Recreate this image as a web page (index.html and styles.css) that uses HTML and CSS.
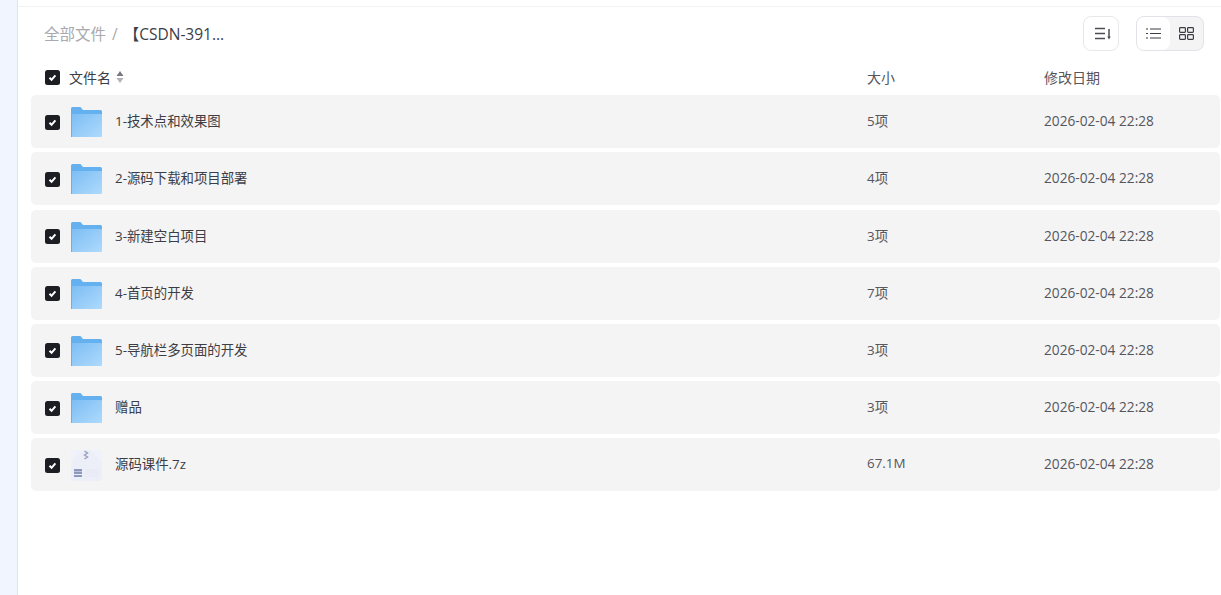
FILE: index.html
```html
<!DOCTYPE html>
<html lang="zh-CN">
<head>
    <meta charset="UTF-8">
    <title>全部文件</title>
    <link rel="stylesheet" href="styles.css">
</head>
<body>
    <svg class="icon-defs" width="0" height="0">
        <defs>
            <linearGradient id="folderFront" x1="0" y1="0" x2="1" y2="1">
                <stop offset="0" stop-color="#7cbdf4"/>
                <stop offset="1" stop-color="#aedafc"/>
            </linearGradient>
            <symbol id="folder" viewBox="0 0 31 30">
                <path d="M0 1.500A1.500 1.500 0 0 1 1.500 0h8l2.500 3h17.500a1.500 1.500 0 0 1 1.500 1.500V12H0z" fill="#65b0ef"/>
                <rect x="0" y="7" width="31" height="23" rx="1" fill="url(#folderFront)"/>
                <rect x="0" y="7" width="1" height="23" fill="#65b0ef"/>
                <rect x="24" y="10" width="5" height="1" fill="#9ccbf3"/>
                <rect x="24" y="12.500" width="5" height="1" fill="#9ccbf3"/>
            </symbol>
            <symbol id="archive" viewBox="0 0 31 31">
                <rect width="31" height="31" rx="3" fill="#f0f2fb"/>
                <path d="M0 12L12 0h7l12 12v16a3 3 0 0 1-3 3H3a3 3 0 0 1-3-3z" fill="#eceef8"/>
                <path d="M13.500 1l3 2-3 2 3 2-3 2" fill="none" stroke="#9aa3c6" stroke-width="1.500"/>
                <path d="M3 19h8v2.500H3zM3 22h8v2H3zM3 25h8v2H3z" fill="#8d98bd"/>
                <rect x="14" y="19" width="14" height="8" fill="#e9ebf6"/>
            </symbol>
            <symbol id="check" viewBox="0 0 15 15">
                <rect width="15" height="15" rx="2.500" fill="#1d1e24"/>
                <path d="M4.500 7.700l2.100 2.100 3.800-4.400" fill="none" stroke="#fff" stroke-width="2"/>
            </symbol>
        </defs>
    </svg>

    <div class="sidebar"></div>

    <main class="content">
        <div class="toolbar">
            <div class="breadcrumb">
                <span class="crumb-root">全部文件</span>
                <span class="crumb-sep">/</span>
                <span class="crumb-current">【CSDN-391...</span>
            </div>
            <div class="toolbar-actions">
                <button class="tool-btn" type="button">
                    <svg width="16" height="13" viewBox="0 0 16 13" fill="none" stroke="#4c4d55" stroke-width="1.500">
                        <path d="M0 1.500h10M0 6.500h10M0 11.500h10M14 2v9"/>
                        <path d="M12.300 9.500h3.400L14 12.500z" fill="#4c4d55" stroke="none"/>
                    </svg>
                </button>
                <div class="view-switch">
                    <span class="view-option view-active">
                        <svg width="15" height="11" viewBox="0 0 15 11" stroke="#3c3d45" stroke-width="1.200">
                            <path d="M0 1h2M4 1h11M0 5.500h2M4 5.500h11M0 10h2M4 10h11"/>
                        </svg>
                    </span>
                    <span class="view-option">
                        <svg width="15" height="13" viewBox="0 0 15 13" fill="none" stroke="#3c3d45" stroke-width="1.200">
                            <rect x=".6" y=".6" width="5.800" height="4.800" rx=".8"/>
                            <rect x="8.600" y=".6" width="5.800" height="4.800" rx=".8"/>
                            <rect x=".6" y="7.600" width="5.800" height="4.800" rx=".8"/>
                            <rect x="8.600" y="7.600" width="5.800" height="4.800" rx=".8"/>
                        </svg>
                    </span>
                </div>
            </div>
        </div>

        <div class="list-head">
            <svg class="check" width="15" height="15"><use href="#check"/></svg>
            <span class="col-name">文件名<svg class="sort-caret" width="8" height="12" viewBox="0 0 8 12">
                    <path d="M4 0l3.500 5H.5z" fill="#77787e"/>
                    <path d="M4 12L.5 7h7z" fill="#b0b1b5"/>
                </svg></span>
            <span class="col-size">大小</span>
            <span class="col-date">修改日期</span>
        </div>

        <div class="file-list">
            <div class="file-row">
                <svg class="check" width="15" height="15"><use href="#check"/></svg>
                <svg class="file-icon" width="31" height="30"><use href="#folder"/></svg>
                <span class="col-name">1-技术点和效果图</span>
                <span class="col-size">5项</span>
                <span class="col-date">2026-02-04 22:28</span>
            </div>
            <div class="file-row">
                <svg class="check" width="15" height="15"><use href="#check"/></svg>
                <svg class="file-icon" width="31" height="30"><use href="#folder"/></svg>
                <span class="col-name">2-源码下载和项目部署</span>
                <span class="col-size">4项</span>
                <span class="col-date">2026-02-04 22:28</span>
            </div>
            <div class="file-row">
                <svg class="check" width="15" height="15"><use href="#check"/></svg>
                <svg class="file-icon" width="31" height="30"><use href="#folder"/></svg>
                <span class="col-name">3-新建空白项目</span>
                <span class="col-size">3项</span>
                <span class="col-date">2026-02-04 22:28</span>
            </div>
            <div class="file-row">
                <svg class="check" width="15" height="15"><use href="#check"/></svg>
                <svg class="file-icon" width="31" height="30"><use href="#folder"/></svg>
                <span class="col-name">4-首页的开发</span>
                <span class="col-size">7项</span>
                <span class="col-date">2026-02-04 22:28</span>
            </div>
            <div class="file-row">
                <svg class="check" width="15" height="15"><use href="#check"/></svg>
                <svg class="file-icon" width="31" height="30"><use href="#folder"/></svg>
                <span class="col-name">5-导航栏多页面的开发</span>
                <span class="col-size">3项</span>
                <span class="col-date">2026-02-04 22:28</span>
            </div>
            <div class="file-row">
                <svg class="check" width="15" height="15"><use href="#check"/></svg>
                <svg class="file-icon" width="31" height="30"><use href="#folder"/></svg>
                <span class="col-name">赠品</span>
                <span class="col-size">3项</span>
                <span class="col-date">2026-02-04 22:28</span>
            </div>
            <div class="file-row">
                <svg class="check" width="15" height="15"><use href="#check"/></svg>
                <svg class="file-icon" width="31" height="31"><use href="#archive"/></svg>
                <span class="col-name">源码课件.7z</span>
                <span class="col-size">67.1M</span>
                <span class="col-date">2026-02-04 22:28</span>
            </div>
        </div>
    </main>
</body>
</html>
```
FILE: styles.css
```css
* {
    box-sizing: border-box;
}

html, body {
    height: 100%;
}

body {
    margin: 0;
    display: flex;
    overflow: hidden;
    background: #fff;
    color: #3c3d45;
    font-family: "Open Sans", "Noto Sans CJK SC", sans-serif;
    font-size: 13.4px;
}

.icon-defs {
    position: absolute;
}

.sidebar {
    width: 18px;
    flex: none;
    background: #f1f5ff;
    border-right: 1px solid #dfe3f0;
}

.content {
    flex: 1;
    min-width: 0;
}

.toolbar {
    height: 58px;
    margin-top: 6px;
    padding: 9px 17px 0 26px;
    display: flex;
    align-items: flex-start;
    justify-content: space-between;
    border-top: 1px solid #f1f2f4;
}

.breadcrumb {
    display: flex;
    align-items: center;
    height: 35px;
    font-size: 15.5px;
    line-height: 20px;
}

.crumb-root,
.crumb-sep {
    color: #a9a9ae;
}

.crumb-sep {
    margin: 0 6px;
}

.crumb-current {
    color: #3c3d45;
}

.toolbar-actions {
    display: flex;
    gap: 17px;
}

.tool-btn {
    width: 36px;
    height: 35px;
    padding: 0 0 0 3px;
    display: flex;
    align-items: center;
    justify-content: center;
    background: #fff;
    border: 1px solid #e8e8ec;
    border-radius: 8px;
}

.view-switch {
    width: 68px;
    height: 35px;
    display: flex;
    background: #f4f4f5;
    border: 1px solid #e2e2e8;
    border-radius: 8px;
    overflow: hidden;
}

.view-option {
    flex: 1;
    display: flex;
    align-items: center;
    justify-content: center;
}

.view-active {
    background: #fff;
    border-radius: 0 8px 8px 0;
}

.list-head,
.file-row {
    display: flex;
    align-items: center;
    padding-left: 14px;
}

.list-head {
    height: 28px;
    margin: 0 1px 3.1px 13px;
    padding-bottom: 2px;
    font-size: 14px;
}

.file-list {
    display: flex;
    flex-direction: column;
    gap: 4.22px;
    margin: 0 1px 0 13px;
}

.file-row {
    height: 53px;
    background: #f4f4f4;
    border-radius: 5px;
}

.file-row span {
    padding-bottom: 3px;
}

.check {
    flex: none;
}

.file-row .check,
.file-row .file-icon {
    margin-top: 1px;
}

.list-head .col-name {
    display: flex;
    align-items: center;
    margin-left: 9px;
    width: 798px;
}

.file-icon {
    flex: none;
    margin-left: 11px;
}

.file-row .col-name {
    margin-left: 13px;
    width: 752px;
}

.col-size {
    width: 177px;
    color: #55565e;
}

.col-date {
    color: #55565e;
}

.file-row .col-date {
    padding-bottom: 2px;
    font-size: 13.7px;
}

.sort-caret {
    margin-left: 5px;
}
```
